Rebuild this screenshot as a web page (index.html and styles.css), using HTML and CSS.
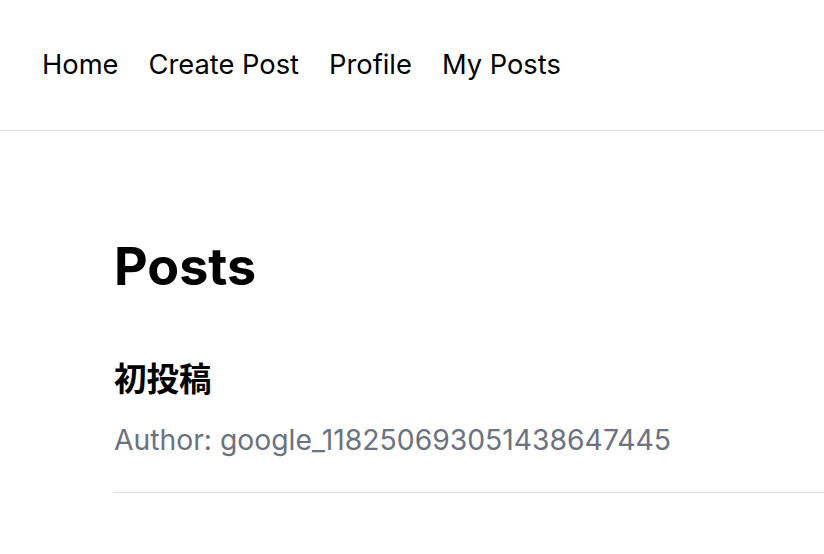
FILE: index.html
```html
<!DOCTYPE html>
<html lang="ja">
<head>
<meta charset="utf-8">
<title>Posts</title>
<link rel="stylesheet" href="styles.css">
</head>
<body>
<nav class="nav">
  <a class="nav-link" href="#">Home</a>
  <a class="nav-link" href="#">Create Post</a>
  <a class="nav-link" href="#">Profile</a>
  <a class="nav-link" href="#">My Posts</a>
</nav>
<main class="main">
  <h1 class="title">Posts</h1>
  <ul class="posts">
    <li class="post">
      <h2 class="post-title">初投稿</h2>
      <p class="post-author">Author: google_118250693051438647445</p>
    </li>
  </ul>
</main>
</body>
</html>
```
FILE: styles.css
```css
* { box-sizing: border-box; }
html, body { margin: 0; padding: 0; background: #fff; }
body {
  font-family: Inter, "Noto Sans CJK JP", sans-serif;
  color: #000;
}
.nav {
  display: flex;
  gap: 30px;
  padding: 44px 42px 0;
  height: 131px;
  border-bottom: 1px solid #dcdcdc;
}
.nav-link {
  font-size: 27.3px;
  line-height: 42px;
  color: #000;
  text-decoration: none;
}
.main {
  padding: 104px 0 0 114px;
}
.title {
  margin: 0;
  font-size: 52px;
  line-height: 63px;
  font-weight: 700;
}
.posts {
  list-style: none;
  margin: 61px 0 0;
  padding: 0;
}
.post {
  border-bottom: 1px solid #dcdcdc;
  padding-bottom: 31px;
}
.post-title {
  margin: 0;
  font-size: 32.5px;
  line-height: 42px;
  font-weight: 700;
}
.post-author {
  margin: 18px 0 0;
  font-size: 28.3px;
  line-height: 42px;
  color: #6b7280;
}
```
